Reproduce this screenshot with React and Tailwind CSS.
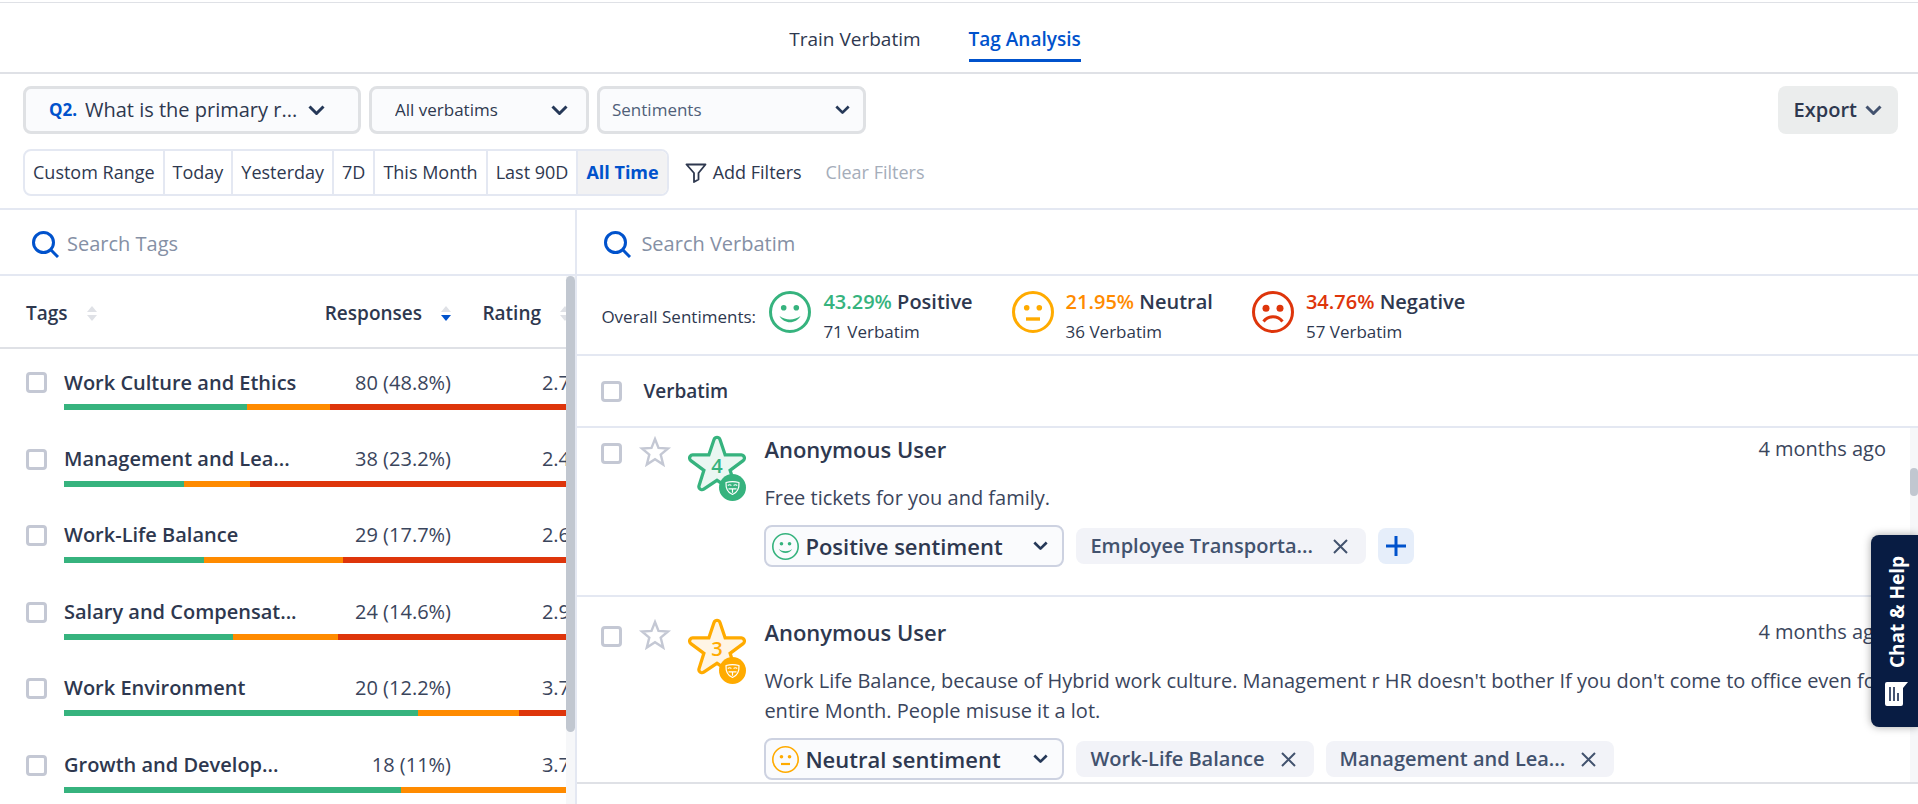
import React from 'react';
import clsx from 'clsx';

const dateRanges = ['Custom Range', 'Today', 'Yesterday', '7D', 'This Month', 'Last 90D', 'All Time'];

const tags = [
  { name: 'Work Culture and Ethics', responses: '80 (48.8%)', rating: '2.7', split: [29, 13, 38] },
  { name: 'Management and Lea...', responses: '38 (23.2%)', rating: '2.4', split: [9, 5, 24] },
  { name: 'Work-Life Balance', responses: '29 (17.7%)', rating: '2.6', split: [8, 8, 13] },
  { name: 'Salary and Compensat...', responses: '24 (14.6%)', rating: '2.9', split: [8, 5, 11] },
  { name: 'Work Environment', responses: '20 (12.2%)', rating: '3.7', split: [14, 4, 2] },
  { name: 'Growth and Develop...', responses: '18 (11%)', rating: '3.7', split: [12, 6, 0] },
];

const sentiments = [
  { mood: 'positive', label: 'Positive', percent: '43.29%', count: '71 Verbatim', color: 'text-[#36b37e]' },
  { mood: 'neutral', label: 'Neutral', percent: '21.95%', count: '36 Verbatim', color: 'text-[#ff8b00]' },
  { mood: 'negative', label: 'Negative', percent: '34.76%', count: '57 Verbatim', color: 'text-[#de350b]' },
];

const verbatims = [
  {
    id: 1,
    user: 'Anonymous User',
    time: '4 months ago',
    rating: 4,
    mood: 'positive',
    sentiment: 'Positive sentiment',
    text: 'Free tickets for you and family.',
    tags: [{ name: 'Employee Transporta...', gap: 'gap-5' }],
    canAdd: true,
  },
  {
    id: 2,
    user: 'Anonymous User',
    time: '4 months ago',
    rating: 3,
    mood: 'neutral',
    sentiment: 'Neutral sentiment',
    text: "Work Life Balance, because of Hybrid work culture. Management r HR doesn't bother If you don't come to office even for entire Month. People misuse it a lot.",
    tags: [
      { name: 'Work-Life Balance', gap: 'gap-4' },
      { name: 'Management and Lea...', gap: 'gap-4' },
    ],
    canAdd: false,
  },
];

const moodColors = {
  positive: { main: '#36b37e', light: '#eaf7f2' },
  neutral: { main: '#ffab00', light: '#fff5e5' },
  negative: { main: '#de350b', light: '#fdecea' },
};

/* ---------- Icons ---------- */

const Chevron = ({ className, width = 3 }) => (
  <svg viewBox="0 0 17 11" fill="none" stroke="currentColor" strokeWidth={width} className={className} aria-hidden="true">
    <path d="M1.5 1.5 8.5 8.5 15.5 1.5" strokeLinejoin="round" />
  </svg>
);

const SearchIcon = () => (
  <svg viewBox="0 0 27 27" fill="none" stroke="#0052cc" strokeWidth="3" className="w-[27px] h-[27px] shrink-0" aria-hidden="true">
    <circle cx="11.5" cy="11.5" r="10" />
    <path d="M18.5 18.5 26 26" />
  </svg>
);

const FunnelIcon = () => (
  <svg viewBox="0 0 22 20" fill="none" stroke="currentColor" strokeWidth="1.8" strokeLinejoin="round" className="w-[22px] h-5" aria-hidden="true">
    <path d="M1.5 1.5h19L13.5 10v6.5L9 19v-9z" />
  </svg>
);

const SortIcon = ({ active }) => (
  <svg viewBox="0 0 10 15" className="w-[10px] h-[15px] shrink-0" aria-hidden="true">
    <path d="M5 0 10 6H0z" fill="#dfe1e6" />
    <path d="M0 9h10L5 15z" fill={active ? '#0052cc' : '#dfe1e6'} />
  </svg>
);

const Face = ({ mood, className, stroke = 3 }) => {
  const color = moodColors[mood].main;
  return (
    <svg viewBox="0 0 42 42" className={className} fill="none" aria-hidden="true">
      <circle cx="21" cy="21" r={21 - stroke / 2} stroke={color} strokeWidth={stroke} />
      {mood === 'negative' ? (
        <>
          <circle cx="14" cy="17.3" r="3.5" fill={color} />
          <circle cx="28" cy="17.3" r="3.5" fill={color} />
          <path d="M11.5 30.5c5-6.3 14-6.3 19 0" stroke={color} strokeWidth="3" />
        </>
      ) : (
        <>
          <circle cx="14.7" cy="16.7" r="2.8" fill={color} />
          <circle cx="27.3" cy="16.7" r="2.8" fill={color} />
          {mood === 'positive' ? (
            <path d="M10.5 25c4.5 8.3 16.5 8.3 21 0-6 4.6-15 4.6-21 0z" fill={color} />
          ) : (
            <path d="M14 26.3h14v3.4H14z" fill={color} />
          )}
        </>
      )}
    </svg>
  );
};

const StarOutline = () => (
  <svg viewBox="0 0 34 34" fill="none" stroke="#c4c8d4" strokeWidth="2.4" className="w-[34px] h-[34px]" aria-hidden="true">
    <path d="M17 4 20.5 12.9 30 13.5 22.7 19.6 25.2 29.5 17 24.2 8.8 29.5 11.3 19.6 4 13.5 13.5 12.9z" />
  </svg>
);

const starPath =
  'M29 5.5 34.8 22.7 53.3 23.1 38.5 34.1 44 51.6 29 41.5 14 51.6 19.5 34.1 4.7 23.1 23.2 22.7z';

const RatingStar = ({ value, mood }) => {
  const { main, light } = moodColors[mood];
  return (
    <svg viewBox="0 0 58 66" className="w-[58px] h-[66px]" strokeLinejoin="round" fill="none" role="img" aria-label={`Rated ${value}`}>
      <path d={starPath} stroke={main} strokeWidth="9.5" />
      <path d={starPath} stroke={light} strokeWidth="3" fill={light} />
      <text x="29" y="38" textAnchor="middle" fontSize="20" fontWeight="600" fill={main}>
        {value}
      </text>
      <circle cx="44.5" cy="52.5" r="13.5" fill={main} />
      <g stroke="#fff" strokeWidth="1.2">
        <path d="M38 47.5c4-1 9-1 13 0 .3 5.5-1.5 10-6.5 12-5-2-6.8-6.5-6.5-12z" />
        <path d="M39.8 50.5c1.2-1 2.4-1 3.6 0M45.6 50.5c1.2-1 2.4-1 3.6 0M40.5 53.8h8M44.5 53.8v4" />
      </g>
    </svg>
  );
};

const CloseIcon = () => (
  <svg viewBox="0 0 15 15" fill="none" stroke="currentColor" strokeWidth="2" className="w-[15px] h-[15px]" aria-hidden="true">
    <path d="m1 1 13 13M14 1 1 14" />
  </svg>
);

const PlusIcon = () => (
  <svg viewBox="0 0 20 20" fill="none" stroke="#0052cc" strokeWidth="3" className="w-5 h-5" aria-hidden="true">
    <path d="M10 0v20M0 10h20" />
  </svg>
);

const ChatIcon = () => (
  <svg viewBox="0 0 23 24" className="w-[23px] h-6" aria-hidden="true">
    <path d="M2 0h21l-5 6v16a2 2 0 0 1-2 2H2a2 2 0 0 1-2-2V2a2 2 0 0 1 2-2z" fill="#fff" />
    <path d="M5 5v14M9 5v14M13 11v8" stroke="#081c43" strokeWidth="1.5" />
  </svg>
);

/* ---------- Controls ---------- */

const Checkbox = ({ label }) => (
  <input
    type="checkbox"
    aria-label={label}
    className="block appearance-none w-[21px] h-[21px] shrink-0 rounded border-3 border-[#c4c8d4] bg-white checked:bg-[#0052cc]"
  />
);

const SearchBox = ({ placeholder, className }) => (
  <label className={clsx('flex items-center h-[66px] pt-1 border-b-2 border-[#e4e8f2]', className)}>
    <SearchIcon />
    <input
      type="search"
      aria-label={placeholder}
      placeholder={placeholder}
      className="flex-1 min-w-0 text-[20px] leading-7 outline-none placeholder:text-[#8590a5]"
    />
  </label>
);

const Sortable = ({ children, active }) => (
  <button className="inline-flex items-center gap-[19px] font-semibold">
    {children}
    <SortIcon active={active} />
  </button>
);

/* ---------- Sections ---------- */

const Tabs = () => (
  <nav className="mt-[2px] h-[72px] border-t border-b-2 border-t-[#dfe1e6] border-b-[#dfe1e6] flex justify-center items-start gap-12 pt-5 pr-12 text-[19px]">
    <a href="#train" className="leading-8">Train Verbatim</a>
    <a href="#analysis" className="leading-8 pb-1 font-semibold text-[#0052cc] border-b-3 border-[#0052cc]">Tag Analysis</a>
  </nav>
);

const Filters = () => (
  <section className="pl-[23px] pr-5 py-3 border-b-2 border-[#e4e8f2] flex flex-col gap-[15px]">
    <div className="flex items-stretch gap-2 h-12">
      <label className="grid items-center w-[338px] rounded-lg border-3 border-[#dfe1e4] bg-[#fafbfd]">
        <span className="col-start-1 row-start-1 pl-[23px] text-[17px] font-bold text-[#0052cc]">Q2.</span>
        <select className="col-start-1 row-start-1 appearance-none w-full pl-[59px] text-[20px] outline-none">
          <option>What is the primary r...</option>
        </select>
        <Chevron className="col-start-1 row-start-1 justify-self-end mr-[33px] w-[17px] h-[11px] pointer-events-none text-[#253858]" />
      </label>
      <label className="grid items-center w-[220px] rounded-lg border-3 border-[#dfe1e4] bg-[#fafbfd]">
        <select aria-label="Verbatim filter" className="col-start-1 row-start-1 appearance-none w-full pl-[23px] text-[17px] outline-none">
          <option>All verbatims</option>
        </select>
        <Chevron className="col-start-1 row-start-1 justify-self-end mr-[18px] w-[17px] h-[11px] pointer-events-none text-[#253858]" />
      </label>
      <label className="grid items-center w-[269px] rounded-lg border-3 border-[#dfe1e4] bg-[#fafbfd]">
        <select aria-label="Sentiments" className="col-start-1 row-start-1 appearance-none w-full pl-3 text-[17px] text-[#505f79] outline-none">
          <option>Sentiments</option>
        </select>
        <Chevron className="col-start-1 row-start-1 justify-self-end mr-[13px] w-[15px] h-[10px] pointer-events-none text-[#253858]" />
      </label>
      <button className="ml-auto flex items-center gap-2 rounded-lg bg-[#ebeded] px-4 text-[20px] font-semibold">
        Export
        <Chevron className="w-[17px] h-[11px] text-[#42526e]" />
      </button>
    </div>

    <div className="flex items-center text-[18px]">
      <div className="flex h-[47px] rounded-lg border-2 border-[#e4e8f2] divide-x-2 divide-[#e4e8f2] overflow-hidden">
        {dateRanges.map((range) => (
          <button
            key={range}
            className={clsx('px-2 whitespace-nowrap', range === 'All Time' && 'bg-[#f2f2f3] font-bold text-[#0052cc]')}
          >
            {range}
          </button>
        ))}
      </div>
      <button className="ml-4 flex items-center gap-[6px]">
        <FunnelIcon />
        Add Filters
      </button>
      <button className="ml-6 text-[#a5adba]">Clear Filters</button>
    </div>
  </section>
);

const TagTable = () => (
  <div className="flex flex-1 min-h-0">
    <div className="flex-1 min-w-0 overflow-hidden">
      <table className="w-[570px] table-fixed border-collapse">
        <colgroup>
          <col className="w-16" />
          <col className="w-60" />
          <col className="w-[147px]" />
          <col />
        </colgroup>
        <thead>
          <tr className="h-[72px] border-b-2 border-[#dfe1e6] text-[19px] text-left">
            <th colSpan={2} className="pl-[26px] pt-1"><Sortable>Tags</Sortable></th>
            <th className="pt-1 text-right"><Sortable active>Responses</Sortable></th>
            <th className="pt-1 text-right"><Sortable>Rating</Sortable></th>
          </tr>
        </thead>
        {tags.map((tag) => {
          const [positive, neutral, negative] = tag.split;
          return (
            <tbody key={tag.name} className="group">
              <tr className="h-14">
                <td className="pl-[26px] pt-3"><Checkbox label={tag.name} /></td>
                <td className="pt-3 text-[20px] font-semibold whitespace-nowrap">{tag.name}</td>
                <td className="pt-3 text-[20px] text-right text-[#3a455c]">{tag.responses}</td>
                <td className="pt-3 text-[20px] text-right text-[#3a455c]">{tag.rating}</td>
              </tr>
              <tr className="h-5 group-odd:h-[21px]">
                <td />
                <td colSpan={3} className="align-top">
                  <div className="flex h-[6px]">
                    <div className="bg-[#36b37e]" style={{ flex: positive }} />
                    <div className="bg-[#ff8b00]" style={{ flex: neutral }} />
                    <div className="bg-[#de350b]" style={{ flex: negative }} />
                  </div>
                </td>
              </tr>
            </tbody>
          );
        })}
      </table>
    </div>
    <div className="w-[9px] bg-[#f6f7f9]">
      <div className="h-[456px] rounded-full bg-[#c1c7d0]" />
    </div>
  </div>
);

const OverallSentiments = () => (
  <div className="flex items-center h-20 pl-6 pt-1 border-b-2 border-[#e4e8f2]">
    <p className="w-[154px] text-[17px] whitespace-nowrap">Overall Sentiments:</p>
    <div className="flex gap-[39px] ml-[14px]">
      {sentiments.map((item) => (
        <div key={item.mood} className="flex gap-3">
          <Face mood={item.mood} className="w-[42px] h-[42px] mt-1" />
          <div>
            <p className={clsx('text-[20px] leading-[30px] font-semibold', item.color)}>
              {item.percent} <span className="text-[#2e384f]">{item.label}</span>
            </p>
            <p className="text-[17px] leading-[30px]">{item.count}</p>
          </div>
        </div>
      ))}
    </div>
  </div>
);

const Verbatim = ({ item }) => (
  <article className="flex pl-6 pt-[21px] pb-7 pr-6 border-b-2 border-[#e4e8f2]">
    <div className="pt-2"><Checkbox label="Select verbatim" /></div>
    <button aria-label="Bookmark" className="ml-4 self-start"><StarOutline /></button>
    <div className="ml-4 shrink-0"><RatingStar value={item.rating} mood={item.mood} /></div>
    <div className="ml-[18px] flex-1 min-w-0">
      <div className="flex items-center justify-between leading-7">
        <h3 className="text-[22px] leading-6 font-semibold">{item.user}</h3>
        <time className="text-[20px] text-[#3a455c]">{item.time}</time>
      </div>
      <p className="mt-5 mb-3 -mr-4 text-[20px] leading-[30px] text-[#3a455c]">{item.text}</p>
      <div className="flex items-center gap-3">
        <label className="grid items-center w-[300px] h-[42px] rounded-lg border-2 border-[#cdd2e1] bg-[#fafbfd]">
          <Face mood={item.mood} stroke={2.5} className="col-start-1 row-start-1 ml-[6px] w-[27px] h-[27px] pointer-events-none" />
          <select aria-label="Sentiment" className="col-start-1 row-start-1 appearance-none w-full pl-[39px] text-[22px] font-semibold outline-none">
            <option>{item.sentiment}</option>
          </select>
          <Chevron className="col-start-1 row-start-1 justify-self-end mr-[14px] w-[15px] h-[10px] pointer-events-none text-[#253858]" />
        </label>
        {item.tags.map((tag) => (
          <span key={tag.name} className={clsx('flex items-center h-9 pl-[14px] pr-[18px] rounded-lg bg-[#f2f3f8] text-[20px] font-semibold text-[#42526e]', tag.gap)}>
            {tag.name}
            <button aria-label={`Remove ${tag.name}`}><CloseIcon /></button>
          </span>
        ))}
        {item.canAdd && (
          <button aria-label="Add tag" className="grid place-items-center w-9 h-9 rounded-lg bg-[#e6eefa]">
            <PlusIcon />
          </button>
        )}
      </div>
    </div>
  </article>
);

const App = () => {
  return (
    <div className="relative flex flex-col h-screen overflow-hidden bg-white text-[#2e384f] font-['Open_Sans','Noto_Sans',sans-serif]">
      <Tabs />
      <Filters />

      <main className="flex flex-1 min-h-0">
        {/* Tags */}
        <aside className="flex flex-col w-[30%] shrink-0">
          <SearchBox placeholder="Search Tags" className="pl-8 gap-2" />
          <TagTable />
        </aside>

        {/* Verbatims */}
        <section className="flex flex-col flex-1 min-w-0 pb-5 border-l-2 border-[#e4e8f2]">
          <SearchBox placeholder="Search Verbatim" className="pl-[27px] gap-[10px]" />
          <OverallSentiments />
          <div className="flex items-center gap-[21px] h-[72px] pl-6 shrink-0 border-b-2 border-[#e4e8f2]">
            <Checkbox label="Select all" />
            <h2 className="text-[19px] font-semibold">Verbatim</h2>
          </div>
          <div className="flex flex-1 min-h-0 border-b-2 border-[#dfe1e6]">
            <div className="flex-1 min-w-0 overflow-hidden">
              <div className="-mt-[14px]">
                {verbatims.map((item) => (
                  <Verbatim key={item.id} item={item} />
                ))}
              </div>
            </div>
            <div className="w-2 pt-10 bg-[#f6f7f9]">
              <div className="h-7 rounded-full bg-[#c1c7d0]" />
            </div>
          </div>
        </section>
      </main>

      {/* Floating help button */}
      <button className="absolute right-0 bottom-[77px] flex flex-col items-center gap-[14px] h-48 w-[47px] pl-1 justify-center rounded-l-lg bg-[#081c43] text-white shadow-[0_0_8px_rgba(0,0,0,0.35)]">
        <span className="text-[19px] leading-6 font-bold [writing-mode:vertical-rl] rotate-180 whitespace-nowrap">Chat &amp; Help</span>
        <ChatIcon />
      </button>
    </div>
  );
};

export default App;
